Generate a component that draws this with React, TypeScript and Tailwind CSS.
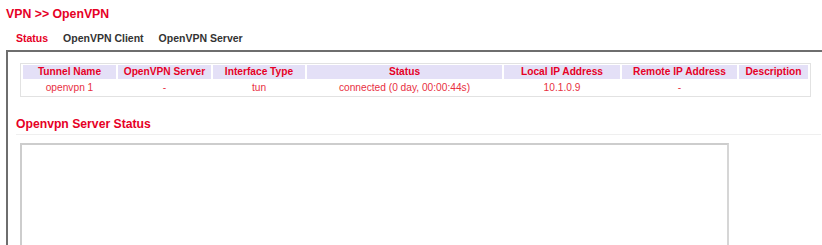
import React from "react";

const cols = [
  { h: "Tunnel Name", v: "openvpn 1", w: "w-[93px]" },
  { h: "OpenVPN Server", v: "-", w: "w-[93px]" },
  { h: "Interface Type", v: "tun", w: "w-[92px]" },
  { h: "Status", v: "connected (0 day, 00:00:44s)", w: "w-[195px]" },
  { h: "Local IP Address", v: "10.1.0.9", w: "w-[116px]" },
  { h: "Remote IP Address", v: "-", w: "w-[115px]" },
  { h: "Description", v: "", w: "w-[69px]" },
];

export default function App() {
  return (
    <div className="w-[822px] h-[245px] overflow-hidden bg-white font-['Liberation_Sans',Arial,sans-serif]">
      <div className="pl-[6px] pt-[7px] text-[12.3px] leading-[14px] font-bold text-[#e60026]">
        VPN &gt;&gt; OpenVPN
      </div>
      <div className="flex gap-[15px] pl-[16px] mt-[10px] text-[10.5px] leading-[14px] font-bold">
        <span className="text-[#e60026]">Status</span>
        <span className="text-[#333]">OpenVPN Client</span>
        <span className="text-[#333]">OpenVPN Server</span>
      </div>
      <div className="ml-[6px] mt-[5px] h-[200px] border-l-2 border-t-2 border-[#6e6e6e]">
        <table className="ml-[12px] mt-[11px] w-[791px] table-fixed border border-[#e2e2e2] border-separate border-spacing-x-[2px] border-spacing-y-[1px] text-[10.2px]">
          <thead>
            <tr>
              {cols.map((c) => (
                <th
                  key={c.h}
                  className={`${c.w} h-[14px] p-0 leading-[14px] bg-[#e4e0f7] text-[#e60026] font-bold text-center whitespace-nowrap`}
                >
                  {c.h}
                </th>
              ))}
            </tr>
          </thead>
          <tbody>
            <tr>
              {cols.map((c) => (
                <td
                  key={c.h}
                  className="h-[15px] p-0 leading-[15px] text-[#e8303f] text-center whitespace-nowrap"
                >
                  {c.v}
                </td>
              ))}
            </tr>
          </tbody>
        </table>
        <div className="ml-[8px] mr-[1px] mt-[20px] pb-[3px] border-b border-[#efefef] text-[12.2px] leading-[14px] font-bold text-[#e60026]">
          Openvpn Server Status
        </div>
        <div className="ml-[12px] mt-[8px] w-[709px] h-[120px] border-2 border-t-[#cdcdcd] border-l-[#cdcdcd] border-r-[#d6d6d6] border-b-[#d6d6d6] bg-white" />
      </div>
    </div>
  );
}
